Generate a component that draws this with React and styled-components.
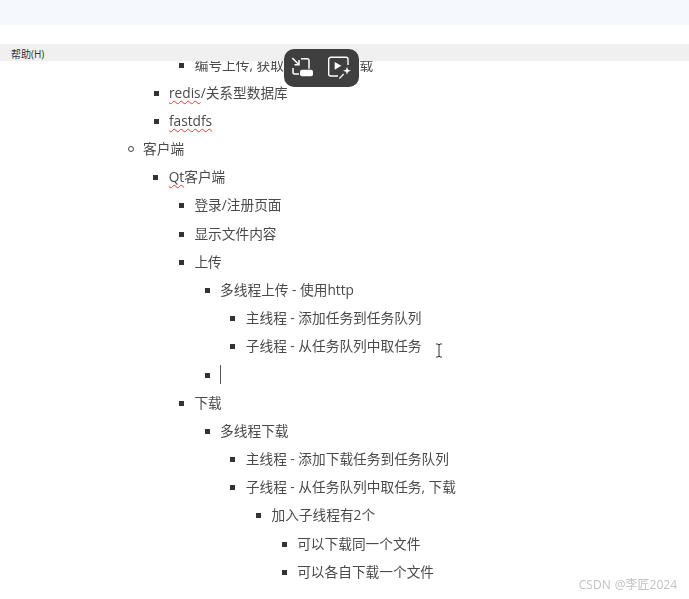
import React from "react";
import styled, { createGlobalStyle } from "styled-components";

const Global = createGlobalStyle`
  html, body { margin: 0; padding: 0; background: #fff; }
  body { font-family: "Open Sans", "Noto Sans CJK SC", sans-serif; }
`;

const Page = styled.div`
  position: relative;
  width: 689px;
  height: 599px;
  overflow: hidden;
  background: #fff;
  display: flex;
  flex-direction: column;
`;

const TopBand = styled.div`
  height: 25px;
  flex: none;
  background: #f5f9fe;
`;

const Gap = styled.div`
  height: 19px;
  flex: none;
`;

const MenuBar = styled.div`
  height: 17px;
  flex: none;
  display: flex;
  align-items: center;
  padding: 2px 0 0 11px;
  box-sizing: border-box;
  background: #f0f0f0;
  font-size: 10px;
  color: #333;
`;

const Doc = styled.div`
  flex: 1;
  overflow: hidden;
  filter: blur(0.35px);
`;

const List = styled.ul`
  margin: 0;
  padding: 0 0 0 ${(p) => p.$indent || 25.7}px;
  list-style: none;
`;

const RootList = styled(List)`
  margin-top: -10.4px;
  padding-left: 169px;
`;

const Item = styled.li`
  position: relative;
  font-size: 13.7px;
  line-height: 28.17px;
  color: #4a4a4a;
  &::before {
    content: "";
    position: absolute;
    left: -15.5px;
    top: 12px;
    width: 5px;
    height: 5px;
    background: #333;
  }
`;

const CircleItem = styled(Item)`
  &::before {
    left: -15.5px;
    top: 11px;
    width: 4px;
    height: 4px;
    background: transparent;
    border: 1px solid #444;
    border-radius: 50%;
  }
`;

const Spell = styled.span`
  text-decoration: underline wavy #e0403a 1px;
  text-underline-offset: 2px;
`;

const Caret = styled.span`
  display: inline-block;
  width: 1px;
  height: 19px;
  vertical-align: -4px;
  background: #555;
`;

const Pill = styled.div`
  position: absolute;
  left: 284px;
  top: 49px;
  width: 75px;
  height: 38px;
  border-radius: 10px;
  background: #3f3f3f;
  display: flex;
  align-items: center;
  justify-content: space-between;
  padding: 0 7px;
  box-sizing: border-box;
`;

const Beam = styled.svg`
  position: absolute;
  left: 435px;
  top: 343px;
`;

const Watermark = styled.div`
  position: absolute;
  right: 12px;
  bottom: 6px;
  font-family: "Open Sans", "Noto Sans CJK SC", sans-serif;
  font-size: 12px;
  line-height: 16px;
  word-spacing: 1px;
  color: #c2c2c2;
  filter: blur(0.3px);
`;

const FitIcon = () => (
  <svg width="24" height="22" viewBox="0 0 24 22" fill="none" stroke="#fff" strokeWidth="1.5">
    <path d="M10 1.700h6.300a1.700 1.700 0 0 1 1.700 1.700V11.700" />
    <path d="M2 11v4.500A1.500 1.500 0 0 0 3.500 17H8" />
    <path d="M1.300 1l6.700 6.700M8 3v4.700H3.500" />
    <rect x="9" y="12.700" width="13" height="6.500" rx="2" fill="#fff" stroke="none" />
  </svg>
);

const MagicPlayIcon = () => (
  <svg width="26" height="26" viewBox="0 0 26 26" fill="none" stroke="#fff" strokeWidth="1.400">
    <path d="M22 10V4.300a2 2 0 0 0-2-2H4.700a2 2 0 0 0-2 2V19a2 2 0 0 0 2 2H12" />
    <path d="M8.700 7v7.700l6.600-3.900z" fill="#fff" stroke="none" />
    <path d="M21 11.700l1 3 3 1-3 1-1 3-1-3-3-1 3-1z" fill="#fff" stroke="none" />
    <path d="M17.700 19l-4.400 4.700" strokeWidth="1.200" />
  </svg>
);

export default function App() {
  return (
    <Page>
      <Global />
      <TopBand />
      <Gap />
      <MenuBar>帮助(H)</MenuBar>
      <Doc>
        <RootList>
          <List as="div" $indent={25.7}>
            <Item>编号上传, 获取文件 链接 下载</Item>
          </List>
          <Item><Spell>redis</Spell>/关系型数据库</Item>
          <Item><Spell>fastdfs</Spell></Item>
        </RootList>
        <List $indent={143}>
          <CircleItem>
            客户端
            <List>
              <Item>
                <Spell>Qt</Spell>客户端
                <List>
                  <Item>登录/注册页面</Item>
                  <Item>显示文件内容</Item>
                  <Item>
                    上传
                    <List>
                      <Item>
                        多线程上传 - 使用http
                        <List>
                          <Item>主线程 - 添加任务到任务队列</Item>
                          <Item>子线程 - 从任务队列中取任务</Item>
                        </List>
                      </Item>
                      <Item><Caret /></Item>
                    </List>
                  </Item>
                  <Item>
                    下载
                    <List>
                      <Item>
                        多线程下载
                        <List>
                          <Item>主线程 - 添加下载任务到任务队列</Item>
                          <Item>
                            子线程 - 从任务队列中取任务, 下载
                            <List>
                              <Item>
                                加入子线程有2个
                                <List>
                                  <Item>可以下载同一个文件</Item>
                                  <Item>可以各自下载一个文件</Item>
                                </List>
                              </Item>
                            </List>
                          </Item>
                        </List>
                      </Item>
                    </List>
                  </Item>
                </List>
              </Item>
            </List>
          </CircleItem>
        </List>
      </Doc>
      <Pill>
        <FitIcon />
        <MagicPlayIcon />
      </Pill>
      <Beam width="8" height="15" viewBox="0 0 8 15" fill="none" stroke="#333" strokeWidth="1">
        <path d="M1 1h2l1 1 1-1h2M4 2v11M1 14h2l1-1 1 1h2" />
      </Beam>
      <Watermark>CSDN @李匠2024</Watermark>
    </Page>
  );
}
